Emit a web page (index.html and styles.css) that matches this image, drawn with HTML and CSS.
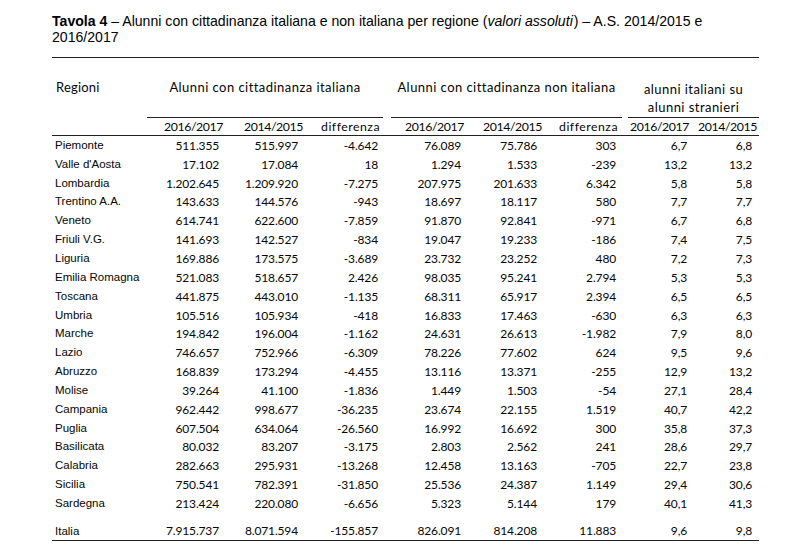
FILE: index.html
```html
<!DOCTYPE html>
<html lang="it">
<head>
<meta charset="utf-8">
<title>Tavola 4</title>
<link rel="stylesheet" href="styles.css">
</head>
<body>
<div class="page">
  <p class="title"><b>Tavola 4</b> – Alunni con cittadinanza italiana e non italiana per regione (<i class="it">valori assoluti</i>) – A.S. 2014/2015 e 2016/2017</p>
  <table class="tab">
    <colgroup>
      <col class="w0"><col class="w1"><col class="w2"><col class="w3"><col class="w4"><col class="w5"><col class="w6"><col class="w7"><col class="w8">
    </colgroup>
    <thead>
      <tr class="grp">
        <th class="reg"><div class="gbox">Regioni</div></th>
        <th colspan="3"><div class="gbox g1">Alunni con cittadinanza italiana</div></th>
        <th colspan="3"><div class="gbox g2">Alunni con cittadinanza non italiana</div></th>
        <th colspan="2"><div class="gbox g3">alunni italiani su<br>alunni stranieri</div></th>
      </tr>
      <tr class="sub">
        <th></th>
        <th class="yr">2016/2017</th><th class="yr">2014/2015</th><th class="df">differenza</th>
        <th class="yr">2016/2017</th><th class="yr">2014/2015</th><th class="df">differenza</th>
        <th class="yr">2016/2017</th><th class="yr">2014/2015</th>
      </tr>
    </thead>
    <tbody>
      <tr><td>Piemonte</td><td>511.355</td><td>515.997</td><td>-4.642</td><td>76.089</td><td>75.786</td><td>303</td><td>6,7</td><td>6,8</td></tr>
      <tr><td>Valle d'Aosta</td><td>17.102</td><td>17.084</td><td>18</td><td>1.294</td><td>1.533</td><td>-239</td><td>13,2</td><td>13,2</td></tr>
      <tr><td>Lombardia</td><td>1.202.645</td><td>1.209.920</td><td>-7.275</td><td>207.975</td><td>201.633</td><td>6.342</td><td>5,8</td><td>5,8</td></tr>
      <tr><td>Trentino A.A.</td><td>143.633</td><td>144.576</td><td>-943</td><td>18.697</td><td>18.117</td><td>580</td><td>7,7</td><td>7,7</td></tr>
      <tr><td>Veneto</td><td>614.741</td><td>622.600</td><td>-7.859</td><td>91.870</td><td>92.841</td><td>-971</td><td>6,7</td><td>6,8</td></tr>
      <tr><td>Friuli V.G.</td><td>141.693</td><td>142.527</td><td>-834</td><td>19.047</td><td>19.233</td><td>-186</td><td>7,4</td><td>7,5</td></tr>
      <tr><td>Liguria</td><td>169.886</td><td>173.575</td><td>-3.689</td><td>23.732</td><td>23.252</td><td>480</td><td>7,2</td><td>7,3</td></tr>
      <tr><td>Emilia Romagna</td><td>521.083</td><td>518.657</td><td>2.426</td><td>98.035</td><td>95.241</td><td>2.794</td><td>5,3</td><td>5,3</td></tr>
      <tr><td>Toscana</td><td>441.875</td><td>443.010</td><td>-1.135</td><td>68.311</td><td>65.917</td><td>2.394</td><td>6,5</td><td>6,5</td></tr>
      <tr><td>Umbria</td><td>105.516</td><td>105.934</td><td>-418</td><td>16.833</td><td>17.463</td><td>-630</td><td>6,3</td><td>6,3</td></tr>
      <tr><td>Marche</td><td>194.842</td><td>196.004</td><td>-1.162</td><td>24.631</td><td>26.613</td><td>-1.982</td><td>7,9</td><td>8,0</td></tr>
      <tr><td>Lazio</td><td>746.657</td><td>752.966</td><td>-6.309</td><td>78.226</td><td>77.602</td><td>624</td><td>9,5</td><td>9,6</td></tr>
      <tr><td>Abruzzo</td><td>168.839</td><td>173.294</td><td>-4.455</td><td>13.116</td><td>13.371</td><td>-255</td><td>12,9</td><td>13,2</td></tr>
      <tr><td>Molise</td><td>39.264</td><td>41.100</td><td>-1.836</td><td>1.449</td><td>1.503</td><td>-54</td><td>27,1</td><td>28,4</td></tr>
      <tr><td>Campania</td><td>962.442</td><td>998.677</td><td>-36.235</td><td>23.674</td><td>22.155</td><td>1.519</td><td>40,7</td><td>42,2</td></tr>
      <tr><td>Puglia</td><td>607.504</td><td>634.064</td><td>-26.560</td><td>16.992</td><td>16.692</td><td>300</td><td>35,8</td><td>37,3</td></tr>
      <tr><td>Basilicata</td><td>80.032</td><td>83.207</td><td>-3.175</td><td>2.803</td><td>2.562</td><td>241</td><td>28,6</td><td>29,7</td></tr>
      <tr><td>Calabria</td><td>282.663</td><td>295.931</td><td>-13.268</td><td>12.458</td><td>13.163</td><td>-705</td><td>22,7</td><td>23,8</td></tr>
      <tr><td>Sicilia</td><td>750.541</td><td>782.391</td><td>-31.850</td><td>25.536</td><td>24.387</td><td>1.149</td><td>29,4</td><td>30,6</td></tr>
      <tr><td>Sardegna</td><td>213.424</td><td>220.080</td><td>-6.656</td><td>5.323</td><td>5.144</td><td>179</td><td>40,1</td><td>41,3</td></tr>
      <tr class="tot"><td>Italia</td><td>7.915.737</td><td>8.071.594</td><td>-155.857</td><td>826.091</td><td>814.208</td><td>11.883</td><td>9,6</td><td>9,8</td></tr>
    </tbody>
  </table>
</div>
</body>
</html>
```

FILE: styles.css
```css
html, body {
  margin: 0;
  padding: 0;
  background: #ffffff;
  color: #050505;
}

.page {
  width: 707px;
  padding: 13px 0 0 52px;
}

.title {
  margin: 0 0 12px 0;
  font-family: "Liberation Sans", Arial, sans-serif;
  font-size: 14.1px;
  line-height: 16px;
  color: #000;
}

.title .it {
  padding-right: 1px;
}

.tab {
  width: 707px;
  table-layout: fixed;
  border-collapse: separate;
  border-spacing: 0;
  border-top: 1px solid #222;
  border-bottom: 1px solid #222;
  font-family: Lato, "Open Sans", sans-serif;
  font-size: 12px;
}

.w0 { width: 95px; }
.w1 { width: 79px; }
.w2 { width: 80px; }
.w3 { width: 80px; }
.w4 { width: 81px; }
.w5 { width: 78px; }
.w6 { width: 80px; }
.w7 { width: 67px; }
.w8 { width: 67px; }

.tab th {
  font-weight: normal;
  padding: 0;
}

.grp th {
  vertical-align: bottom;
  text-align: center;
  font-size: 13px;
  letter-spacing: 0.45px;
}

.gbox {
  box-sizing: border-box;
  height: 60px;
  padding-top: 20px;
  line-height: 18px;
  white-space: nowrap;
}

.grp .reg { text-align: left; letter-spacing: 0.2px; }
.grp .reg .gbox { padding-left: 4px; }

.g1 {
  border-bottom: 1px solid #222;
  margin-right: 3px;
}

.g2 {
  border-bottom: 1px solid #222;
  margin: 0 3px 0 5px;
}

.g3 {
  border-bottom: 1px solid #222;
  margin-left: 3px;
  padding-top: 22px;
}

.sub th {
  box-sizing: border-box;
  height: 18px;
  line-height: 17px;
  border-bottom: 1px solid #222;
  text-align: right;
  padding-right: 3px;
  font-size: 12.3px;
  white-space: nowrap;
}

.sub .yr { letter-spacing: -0.4px; }
.sub .df { letter-spacing: 0.5px; }

.sub th:nth-child(4) { padding-right: 6px; }
.sub th:nth-child(7) { padding-right: 7px; }
.sub th:nth-child(9) { padding-right: 2px; }

.tab td {
  height: 18.85px;
  padding: 0 8px 0 0;
  line-height: 17px;
  text-align: right;
  white-space: nowrap;
  letter-spacing: -0.15px;
}

.tab td:first-child {
  text-align: left;
  padding: 0 0 0 3px;
  font-family: "Liberation Sans", Arial, sans-serif;
  font-size: 11.5px;
  letter-spacing: 0;
}

.tab td:nth-child(2) { padding-right: 7px; }
.tab td:nth-child(5) { padding-right: 6px; }
.tab td:nth-child(7) { padding-right: 9px; }
.tab td:nth-child(8) { padding-right: 5px; }
.tab td:nth-child(9) { padding-right: 7px; }

.tot td {
  height: 26px;
  vertical-align: bottom;
  padding-bottom: 1px;
}
```
